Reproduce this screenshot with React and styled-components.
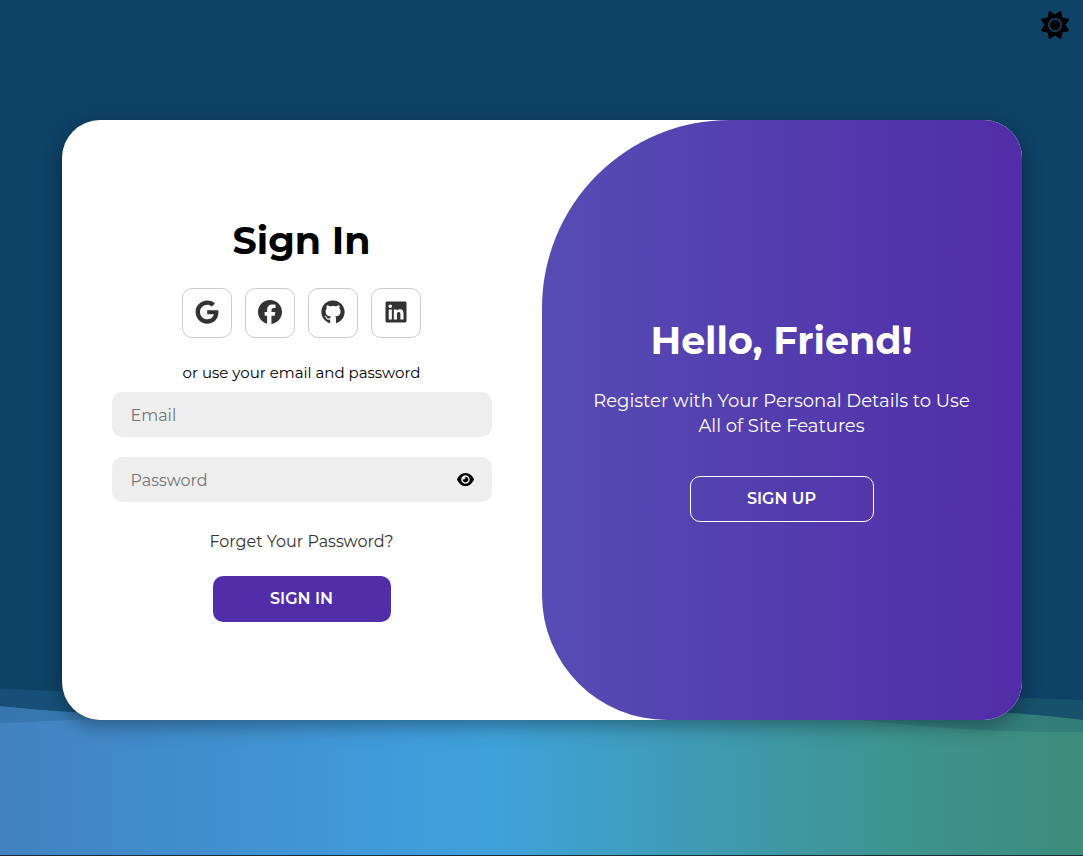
import React, { useState } from "react";
import styled, { createGlobalStyle } from "styled-components";
import { FaSun, FaEye, FaGoogle, FaFacebook, FaGithub, FaLinkedin } from "react-icons/fa6";

const GlobalStyle = createGlobalStyle`
  *, *::before, *::after { box-sizing: border-box; }
  body {
    margin: 0;
    background: #0e4266;
    font-family: Montserrat, Inter, "Open Sans", sans-serif;
  }
`;

const Page = styled.div`
  position: relative;
  min-height: 100vh;
  display: flex;
  flex-direction: column;
  isolation: isolate;
`;

const Backdrop = styled.svg`
  position: absolute;
  inset: auto 0 0;
  z-index: -1;
  width: 100%;
  height: 168px;
  border-bottom: 1px solid #1b2f3b;
`;

const TopBar = styled.header`
  display: flex;
  justify-content: flex-end;
  padding: 11px 14px;
`;

const IconButton = styled.button`
  display: flex;
  padding: 0;
  border: 0;
  background: none;
  color: #000;
  font-size: ${({ $size }) => $size}px;
  cursor: pointer;
`;

const Main = styled.main`
  flex: 1;
  display: flex;
  justify-content: center;
  align-items: flex-start;
  padding: 70px 24px;
`;

const Card = styled.div`
  flex: 0 1 960px;
  display: grid;
  grid-template-columns: 1fr 1fr;
  min-height: 600px;
  border-radius: 38px;
  overflow: hidden;
  background: #fff;
  box-shadow: 0 6px 19px rgba(0, 0, 0, 0.35);
`;

const Form = styled.form`
  display: flex;
  flex-direction: column;
  align-items: center;
  padding: 96px 50px;
`;

const Title = styled.h1`
  margin: 0 0 22px;
  font-size: 38px;
  font-weight: 700;
  line-height: 50px;
`;

const SocialRow = styled.div`
  display: flex;
  gap: 13px;
  margin-bottom: 25px;
`;

const SocialLink = styled.a`
  display: flex;
  align-items: center;
  justify-content: center;
  width: 50px;
  height: 50px;
  padding-bottom: 2px;
  border: 1px solid #ccc;
  border-radius: 10px;
  color: #333;
  font-size: 24px;
`;

const Hint = styled.span`
  margin-bottom: 9px;
  font-size: 15px;
  line-height: 20px;
`;

const Field = styled.div`
  display: flex;
  align-items: center;
  width: 100%;
  height: 45px;
  margin-bottom: 20px;
  padding-right: 18px;
  border-radius: 10px;
  background: #eee;
`;

const Input = styled.input`
  flex: 1;
  min-width: 0;
  height: 100%;
  padding: 2px 19px 0;
  border: 0;
  outline: 0;
  background: none;
  font: 400 16px Montserrat, Inter, "Open Sans", sans-serif;
  &::placeholder { color: #757575; opacity: 1; }
`;

const ForgotLink = styled.a`
  margin: 10px 0 24px;
  color: #333;
  font-size: 16px;
  line-height: 20px;
  text-decoration: none;
`;

const Button = styled.button`
  width: ${({ $outline }) => ($outline ? 184 : 178)}px;
  height: 46px;
  padding: 0 0 2px;
  border: 1px solid ${({ $outline }) => ($outline ? "#fff" : "transparent")};
  border-radius: 10px;
  background: ${({ $outline }) => ($outline ? "transparent" : "#512da8")} border-box;
  color: #fff;
  font: 600 16px Montserrat, Inter, "Open Sans", sans-serif;
  text-transform: uppercase;
  cursor: pointer;
`;

const Welcome = styled.section`
  display: flex;
  flex-direction: column;
  align-items: center;
  justify-content: center;
  padding: 0 48px 2px;
  border-radius: 188px 0 0 125px;
  background: linear-gradient(to right, #564cb4, #512da8);
  color: #fff;
  text-align: center;
`;

const WelcomeText = styled.p`
  margin: 0 0 37px;
  padding-top: 1px;
  font-size: 18px;
  line-height: 25px;
`;

const socials = [
  ["Google", FaGoogle],
  ["Facebook", FaFacebook],
  ["GitHub", FaGithub],
  ["LinkedIn", FaLinkedin],
];

function Waves() {
  return (
    <Backdrop viewBox="0 0 1083 167" preserveAspectRatio="none" aria-hidden="true">
      <defs>
        <linearGradient id="sea" gradientUnits="userSpaceOnUse" x1="0" y1="0" x2="1083" y2="0">
          <stop offset="0" stopColor="#4282c0" />
          <stop offset="0.36" stopColor="#409bda" />
          <stop offset="0.46" stopColor="#3fa2da" />
          <stop offset="0.82" stopColor="#3e9490" />
          <stop offset="1" stopColor="#3c8b7b" />
        </linearGradient>
      </defs>
      <path fill="url(#sea)" fillOpacity="0.2" d="M0 1 C150 6 250 12 400 12 S850 2 1083 12 V167 H0Z" />
      <path fill="url(#sea)" fillOpacity="0.75" d="M0 18 C40 22 90 27 200 29 S760 -6 1083 32 V167 H0Z" />
      <path fill="url(#sea)" d="M0 35 C70 33 140 27 300 20 C560 8 780 24 862 32 C950 42 1010 44 1083 44 V167 H0Z" />
    </Backdrop>
  );
}

export default function App() {
  const [visible, setVisible] = useState(false);
  return (
    <Page>
      <GlobalStyle />
      <Waves />
      <TopBar>
        <IconButton type="button" $size={28} aria-label="Toggle theme"><FaSun /></IconButton>
      </TopBar>
      <Main>
        <Card>
          <Form onSubmit={(e) => e.preventDefault()}>
            <Title>Sign In</Title>
            <SocialRow>
              {socials.map(([name, Icon]) => (
                <SocialLink key={name} href="#" aria-label={name}><Icon /></SocialLink>
              ))}
            </SocialRow>
            <Hint>or use your email and password</Hint>
            <Field>
              <Input type="email" placeholder="Email" aria-label="Email" />
            </Field>
            <Field>
              <Input type={visible ? "text" : "password"} placeholder="Password" aria-label="Password" />
              <IconButton type="button" $size={17} aria-label="Show password" onClick={() => setVisible(!visible)}>
                <FaEye />
              </IconButton>
            </Field>
            <ForgotLink href="#">Forget Your Password?</ForgotLink>
            <Button type="submit">Sign In</Button>
          </Form>
          <Welcome>
            <Title as="h2">Hello, Friend!</Title>
            <WelcomeText>Register with Your Personal Details to Use All of Site Features</WelcomeText>
            <Button type="button" $outline>Sign Up</Button>
          </Welcome>
        </Card>
      </Main>
    </Page>
  );
}
